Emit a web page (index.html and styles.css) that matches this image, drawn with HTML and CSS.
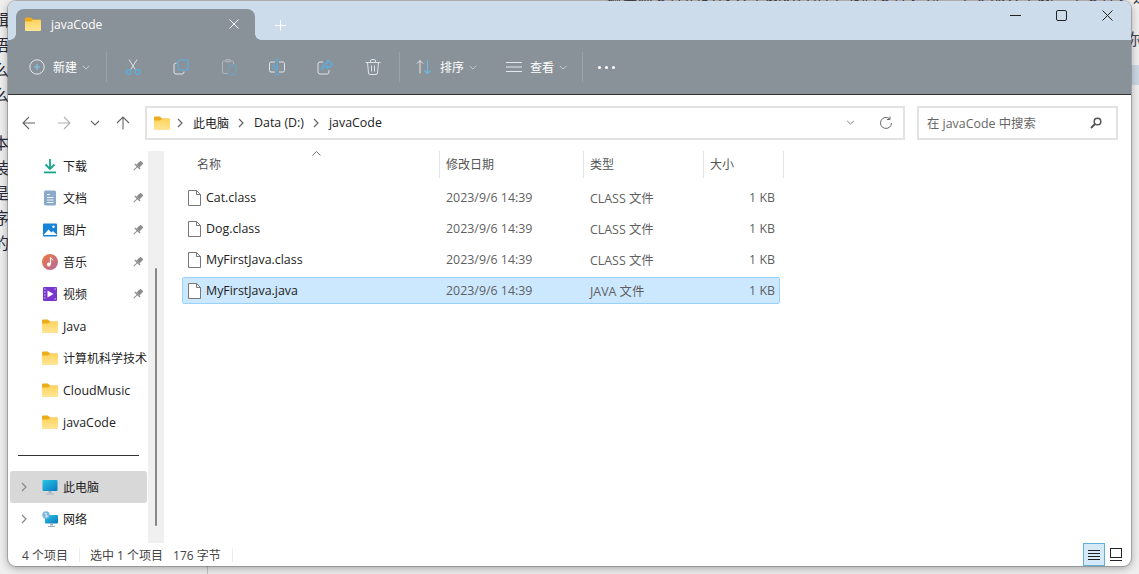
FILE: index.html
```html
<!DOCTYPE html>
<html>
<head lang="zh">
    <meta charset="UTF-8">
    <title>javaCode</title>
    <link rel="stylesheet" href="styles.css">
</head>
<body>

<svg class="icon-defs" xmlns="http://www.w3.org/2000/svg">
    <defs>
        <linearGradient id="folderFront" x1="0" y1="0" x2="0" y2="1">
            <stop offset="0" stop-color="#ffd45e"/>
            <stop offset="1" stop-color="#ffe596"/>
        </linearGradient>
        <linearGradient id="screenBlue" x1="0" y1="0" x2="1" y2="1">
            <stop offset="0" stop-color="#29c6e6"/>
            <stop offset="1" stop-color="#0a78bd"/>
        </linearGradient>
        <linearGradient id="musicBall" x1="0" y1="0" x2="1" y2="1">
            <stop offset="0" stop-color="#ee7a3c"/>
            <stop offset="1" stop-color="#b36aa0"/>
        </linearGradient>
        <symbol id="folder" viewBox="0 0 16 14">
            <path d="M0 1.5a1 1 0 0 1 1-1h5l2 2h7a1 1 0 0 1 1 1v9a1 1 0 0 1-1 1H1a1 1 0 0 1-1-1z" fill="#eeac1c"/>
            <path d="M0 4.5h6l2-1.5h7a1 1 0 0 1 1 1v9a1 1 0 0 1-1 1H1a1 1 0 0 1-1-1z" fill="url(#folderFront)"/>
        </symbol>
        <symbol id="file" viewBox="0 0 13 16">
            <path d="M.5.5h8l4 4v11H.5z" fill="#fff" stroke="#777"/>
            <path d="M8.5.5v4h4" fill="none" stroke="#777"/>
        </symbol>
        <symbol id="pin" viewBox="0 0 12 12">
            <g transform="rotate(45 6 6)" fill="#8b8b8b">
                <rect x="4" y="0.5" width="4" height="5.5"/>
                <rect x="2.4" y="6" width="7.2" height="1.4"/>
                <rect x="5.5" y="7" width="1" height="5"/>
            </g>
        </symbol>
        <symbol id="chev-down" viewBox="0 0 10 6">
            <path d="M1 1l4 4 4-4" fill="none" stroke="currentColor" stroke-width="1"/>
        </symbol>
        <symbol id="chev-right" viewBox="0 0 6 10">
            <path d="M1 1l4 4-4 4" fill="none" stroke="currentColor" stroke-width="1.2"/>
        </symbol>
    </defs>
</svg>

<!-- 窗口后面的文档，只露出边缘 -->
<div class="doc-left">
    <span>辑</span><span>语</span><span>么</span><span>么</span><span class="doc-gap">本</span><span>装</span><span>是</span><span>序</span><span>的</span>
</div>
<div class="doc-top">编译源文件的时候会生成对应的字节码文件，每一个类都会生成一个文件，运行的时候使用类名称</div>
<div class="doc-right">你</div>
<div class="doc-band"></div>
<div class="doc-line"></div>

<div class="window">

    <div class="titlebar">
        <div class="tab">
            <svg class="tab-folder"><use href="#folder"/></svg>
            <span class="tab-name">javaCode</span>
            <svg class="tab-close" viewBox="0 0 10 10"><path d="M.5.5l9 9M9.5.5l-9 9" stroke="#fff" stroke-width="1"/></svg>
        </div>
        <svg class="tab-add" viewBox="0 0 11 11"><path d="M5.5 0v11M0 5.5h11" stroke="#fff" stroke-width="1"/></svg>
        <div class="win-btns">
            <svg class="win-btn" viewBox="0 0 11 11"><path d="M0 5.5h11" stroke="#222" stroke-width="1"/></svg>
            <svg class="win-btn" viewBox="0 0 11 11"><rect x="0.5" y="0.5" width="10" height="10" rx="1.5" fill="none" stroke="#222"/></svg>
            <svg class="win-btn" viewBox="0 0 11 11"><path d="M.5.5l10 10M10.5.5l-10 10" stroke="#222" stroke-width="1"/></svg>
        </div>
    </div>

    <div class="toolbar">
        <div class="tool-new">
            <svg class="tool-svg" viewBox="0 0 16 16"><circle cx="8" cy="8" r="7.2" fill="none" stroke="#e4e8ec"/><path d="M8 5v6M5 8h6" stroke="#7cc4ec" stroke-width="1.2"/></svg>
            <span class="tool-text">新建</span>
            <svg class="tool-chev"><use href="#chev-down"/></svg>
        </div>
        <div class="tool-sep sep-first"></div>
        <div class="tool-btn">
            <svg class="tool-svg" viewBox="0 0 16 16"><path d="M4 .5l6.2 10M12 .5L5.8 10.5" stroke="#dfe3e6" fill="none"/><circle cx="3.5" cy="13" r="2.4" fill="none" stroke="#5aaee0" stroke-width="1.3"/><circle cx="12.5" cy="13" r="2.4" fill="none" stroke="#5aaee0" stroke-width="1.3"/></svg>
        </div>
        <div class="tool-btn">
            <svg class="tool-svg" viewBox="0 0 16 16"><rect x="5" y="1" width="10" height="10" rx="2" fill="none" stroke="#5aaee0" stroke-width="1.2"/><path d="M3.5 4H3a2 2 0 0 0-2 2v7a2 2 0 0 0 2 2h6a2 2 0 0 0 2-2v-.5" fill="none" stroke="#dfe3e6"/></svg>
        </div>
        <div class="tool-btn dim">
            <svg class="tool-svg" viewBox="0 0 16 16"><path d="M7 14.5H3A1.5 1.5 0 0 1 1.5 13V3.5A1.5 1.5 0 0 1 3 2h8a1.5 1.5 0 0 1 1.5 1.5V5" fill="none" stroke="#c4c9cd"/><rect x="4.5" y="0.5" width="5" height="2.5" rx="1" fill="none" stroke="#c4c9cd"/><rect x="8" y="6" width="7" height="9.5" rx="1" fill="none" stroke="#5aaee0"/></svg>
        </div>
        <div class="tool-btn">
            <svg class="tool-svg" viewBox="0 0 16 16"><path d="M6 3H2A1.5 1.5 0 0 0 .5 4.5v7A1.5 1.5 0 0 0 2 13h4M10 3h4a1.5 1.5 0 0 1 1.5 1.5v7A1.5 1.5 0 0 1 14 13h-4" fill="none" stroke="#dfe3e6"/><path d="M8 .5v15M6 .5h4M6 15.5h4" fill="none" stroke="#5aaee0" stroke-width="1.2"/><path d="M3 10.5l2-5 2 5" fill="none" stroke="#5aaee0"/></svg>
        </div>
        <div class="tool-btn">
            <svg class="tool-svg" viewBox="0 0 16 16"><path d="M6 3H3a2 2 0 0 0-2 2v8a2 2 0 0 0 2 2h7a2 2 0 0 0 2-2v-2" fill="none" stroke="#dfe3e6"/><path d="M10.5 1l5 4.3-5 4.2V7C7.5 7 6 8.500 5 11c0-4 2-6.500 5.500-6.800z" fill="none" stroke="#5aaee0" stroke-width="1.2"/></svg>
        </div>
        <div class="tool-btn">
            <svg class="tool-svg" viewBox="0 0 16 16"><path d="M.5 3.5h15M5.5 3.5V2A1.5 1.5 0 0 1 7 .5h2A1.5 1.5 0 0 1 10.5 2v1.5M2.500 3.5l1 10.500A1.5 1.5 0 0 0 5 15.500h6a1.5 1.5 0 0 0 1.500-1.500l1-10.500M6.500 6.500v6M9.500 6.500v6" fill="none" stroke="#dfe3e6"/></svg>
        </div>
        <div class="tool-sep sep-second"></div>
        <div class="tool-menu">
            <svg class="tool-svg" viewBox="0 0 16 16"><path d="M4 1.5v13M1 4.5l3-3 3 3" fill="none" stroke="#dfe3e6"/><path d="M11.5 1.5v13M8.5 11.5l3 3 3-3" fill="none" stroke="#6cb8e8" stroke-width="1.2"/></svg>
            <span class="tool-text">排序</span>
            <svg class="tool-chev"><use href="#chev-down"/></svg>
        </div>
        <div class="tool-menu view-menu">
            <svg class="tool-svg" viewBox="0 0 16 16"><path d="M0 3.5h16M0 8h16M0 12.5h16" stroke="#e4e8ec"/></svg>
            <span class="tool-text">查看</span>
            <svg class="tool-chev"><use href="#chev-down"/></svg>
        </div>
        <div class="tool-sep sep-third"></div>
        <div class="tool-dots"><i></i><i></i><i></i></div>
    </div>

    <div class="addressrow">
        <svg class="nav-btn nav-back" viewBox="0 0 34 14"><path d="M23 7H11M17 1l-6 6 6 6" fill="none" stroke="#666" stroke-width="1.1"/></svg>
        <svg class="nav-btn nav-fwd" viewBox="0 0 34 14"><path d="M11 7h12M17 1l6 6-6 6" fill="none" stroke="#b0b0b0" stroke-width="1.1"/></svg>
        <svg class="nav-btn nav-small" viewBox="0 0 28 14"><path d="M10 5l4 4 4-4" fill="none" stroke="#666" stroke-width="1.1"/></svg>
        <svg class="nav-btn nav-small" viewBox="0 0 28 14"><path d="M14 13.5V1M8 7l6-6 6 6" fill="none" stroke="#666" stroke-width="1.1"/></svg>

        <div class="address">
            <svg class="address-folder"><use href="#folder"/></svg>
            <svg class="crumb-chev"><use href="#chev-right"/></svg>
            <span class="crumb">此电脑</span>
            <svg class="crumb-chev"><use href="#chev-right"/></svg>
            <span class="crumb latin">Data (D:)</span>
            <svg class="crumb-chev"><use href="#chev-right"/></svg>
            <span class="crumb latin">javaCode</span>
            <svg class="address-down"><use href="#chev-down"/></svg>
            <svg class="address-refresh" viewBox="0 0 14 14"><path d="M12.5 7a5.500 5.500 0 1 1-2-4.300M11 .5v3H8" fill="none" stroke="#666" stroke-width="1"/></svg>
        </div>

        <div class="search">
            <span class="search-text latin">在 javaCode 中搜索</span>
            <svg class="search-icon" viewBox="0 0 12 12"><circle cx="7.5" cy="4.500" r="3.300" fill="none" stroke="#555" stroke-width="1.5"/><path d="M5 7l-4 4" stroke="#555" stroke-width="2"/></svg>
        </div>
    </div>

    <div class="content">
        <div class="sidebar">
            <div class="side-item">
                <i class="side-slot"></i>
                <svg class="side-icon" viewBox="0 0 16 16"><path d="M8 1v9.5M3.5 6.5L8 11l4.5-4.5" fill="none" stroke="#15a688" stroke-width="1.8"/><rect x="2" y="13.5" width="12" height="1.8" fill="#15a688"/></svg>
                <span>下载</span>
                <svg class="side-pin"><use href="#pin"/></svg>
            </div>
            <div class="side-item">
                <i class="side-slot"></i>
                <svg class="side-icon" viewBox="0 0 16 16"><rect x="2" y="0.5" width="12" height="15" rx="1.5" fill="#8ba9c9"/><path d="M5 4.5h3M5 7.5h6.500M5 10h6.500M5 12.500h6.500" stroke="#eef3f8"/></svg>
                <span>文档</span>
                <svg class="side-pin"><use href="#pin"/></svg>
            </div>
            <div class="side-item">
                <i class="side-slot"></i>
                <svg class="side-icon" viewBox="0 0 16 16"><rect x="1" y="1.5" width="14" height="13" rx="1" fill="#1583d8"/><path d="M1.5 13l5-5.500 3 3 1.500-1.500 4 4z" fill="#fff"/><circle cx="11.5" cy="4.800" r="1.200" fill="#fff"/></svg>
                <span>图片</span>
                <svg class="side-pin"><use href="#pin"/></svg>
            </div>
            <div class="side-item">
                <i class="side-slot"></i>
                <svg class="side-icon" viewBox="0 0 16 16"><circle cx="8" cy="8" r="8" fill="url(#musicBall)"/><path d="M8.5 3.5V10" stroke="#fff" stroke-width="1.2"/><path d="M8.5 3.5c.5 1.500 2.500 1.500 2.500 3" stroke="#fff" fill="none"/><circle cx="6.8" cy="10.500" r="1.900" fill="#fff"/></svg>
                <span>音乐</span>
                <svg class="side-pin"><use href="#pin"/></svg>
            </div>
            <div class="side-item">
                <i class="side-slot"></i>
                <svg class="side-icon" viewBox="0 0 16 16"><rect x="1" y="1" width="14" height="14" rx="1" fill="#7b35cf"/><path d="M5.5 4.500v7l6-3.500z" fill="#fff"/><path d="M2 3h1.500M2 6h1.500M2 9h1.500M2 12h1.500M12.500 3H14M12.500 13H14" stroke="#d9c3f3"/></svg>
                <span>视频</span>
                <svg class="side-pin"><use href="#pin"/></svg>
            </div>
            <div class="side-item">
                <i class="side-slot"></i>
                <svg class="side-icon"><use href="#folder"/></svg>
                <span class="latin">Java</span>
            </div>
            <div class="side-item">
                <i class="side-slot"></i>
                <svg class="side-icon"><use href="#folder"/></svg>
                <span>计算机科学技术</span>
            </div>
            <div class="side-item">
                <i class="side-slot"></i>
                <svg class="side-icon"><use href="#folder"/></svg>
                <span class="latin">CloudMusic</span>
            </div>
            <div class="side-item">
                <i class="side-slot"></i>
                <svg class="side-icon"><use href="#folder"/></svg>
                <span class="latin">javaCode</span>
            </div>

            <div class="side-sep"></div>

            <div class="side-item side-hover">
                <svg class="side-slot"><use href="#chev-right"/></svg>
                <svg class="side-icon" viewBox="0 0 16 16"><rect x="0.5" y="1" width="15" height="11" rx="1" fill="url(#screenBlue)"/><path d="M6.5 12h3v2h-3z" fill="#a8b6bf"/><path d="M4 15h8" stroke="#a8b6bf"/></svg>
                <span>此电脑</span>
            </div>
            <div class="side-item">
                <svg class="side-slot"><use href="#chev-right"/></svg>
                <svg class="side-icon" viewBox="0 0 16 16"><rect x="3" y="4" width="13" height="8.5" rx="1" fill="url(#screenBlue)"/><path d="M8 12.5h3v2H8z" fill="#9fb0ba"/><path d="M6 15.5h7" stroke="#9fb0ba"/><circle cx="4" cy="4" r="3.7" fill="#7fb6dc"/><path d="M2 2.5c2-1 3-.5 3 .5S3 4 3.5 5.5 5 6.5 6 5" fill="#dcecf7"/></svg>
                <span>网络</span>
            </div>
        </div>

        <div class="side-scroll"><div class="side-thumb"></div></div>

        <div class="files">
            <div class="file-head">
                <div class="head-cell head-name">名称
                    <svg class="sort-caret" viewBox="0 0 9 5"><path d="M.5 4.5l4-4 4 4" fill="none" stroke="#777"/></svg>
                </div>
                <div class="head-cell head-date">修改日期</div>
                <div class="head-cell head-type">类型</div>
                <div class="head-cell head-size">大小</div>
            </div>

            <div class="file-row">
                <div class="file-name"><svg class="file-icon"><use href="#file"/></svg>Cat.class</div>
                <div class="file-info">2023/9/6 14:39</div>
                <div class="file-info">CLASS 文件</div>
                <div class="file-info file-size">1 KB</div>
            </div>
            <div class="file-row">
                <div class="file-name"><svg class="file-icon"><use href="#file"/></svg>Dog.class</div>
                <div class="file-info">2023/9/6 14:39</div>
                <div class="file-info">CLASS 文件</div>
                <div class="file-info file-size">1 KB</div>
            </div>
            <div class="file-row">
                <div class="file-name"><svg class="file-icon"><use href="#file"/></svg>MyFirstJava.class</div>
                <div class="file-info">2023/9/6 14:39</div>
                <div class="file-info">CLASS 文件</div>
                <div class="file-info file-size">1 KB</div>
            </div>
            <div class="file-row file-selected">
                <div class="file-name"><svg class="file-icon"><use href="#file"/></svg>MyFirstJava.java</div>
                <div class="file-info">2023/9/6 14:39</div>
                <div class="file-info">JAVA 文件</div>
                <div class="file-info file-size">1 KB</div>
            </div>
        </div>
    </div>

    <div class="statusbar">
        <span class="status-count">4 个项目</span>
        <i class="status-sep"></i>
        <span class="status-chosen">选中 1 个项目</span>
        <span class="status-bytes">176 字节</span>
        <i class="status-sep status-sep-last"></i>
        <div class="view-list">
            <svg viewBox="0 0 12 12"><path d="M0 1.5h12M0 4.5h12M0 7.5h12M0 10.5h12" stroke="#222"/></svg>
        </div>
        <svg class="view-tile" viewBox="0 0 12 13"><rect x="0.5" y="0.5" width="11" height="9" fill="none" stroke="#222"/><path d="M0 12.5h12" stroke="#222"/></svg>
    </div>

</div>

</body>
</html>
```

FILE: styles.css
```css
html, body {
    margin: 0;
    padding: 0;
    width: 100%;
    height: 100%;
    overflow: hidden;
}

body {
    position: relative;
    background: #efefef;
    font-family: "Open Sans", "Noto Sans CJK SC", sans-serif;
    font-size: 12px;
    color: #222222;
}

svg {
    display: block;
    flex: none;
}

i {
    display: block;
    flex: none;
}

.latin {
    font-size: 12.4px;
}

.icon-defs {
    position: absolute;
    width: 0;
    height: 0;
}

/* 窗口后面的文档 */
.doc-left {
    position: absolute;
    left: -7px;
    top: 8px;
    display: flex;
    flex-direction: column;
    font-size: 16px;
    line-height: 25px;
    color: #2a2a3a;
}

.doc-gap {
    margin-top: 23px;
}

.doc-top {
    position: absolute;
    left: 605px;
    top: -14px;
    width: 534px;
    white-space: nowrap;
    overflow: hidden;
    font-size: 16px;
    line-height: 20px;
    color: #333344;
}

.doc-right {
    position: absolute;
    left: 1125px;
    top: 28px;
    font-size: 16px;
    line-height: 22px;
    color: #444455;
}

.doc-band {
    position: absolute;
    left: 1125px;
    top: 65px;
    width: 14px;
    height: 20px;
    background: #cbd8e4;
}

.doc-line {
    position: absolute;
    left: 207px;
    top: 560px;
    width: 1px;
    height: 14px;
    background: #c4c4c4;
}

/* 窗口 */
.window {
    position: absolute;
    left: 8px;
    top: 1px;
    width: 1123px;
    height: 565px;
    display: flex;
    flex-direction: column;
    background: #ffffff;
    border-radius: 8px;
    overflow: hidden;
    box-shadow: 0 0 0 1px rgba(90, 90, 90, 0.35), 0 2px 8px rgba(0, 0, 0, 0.35);
}

.titlebar {
    height: 39px;
    flex: none;
    display: flex;
    align-items: flex-end;
    background: #cddcea;
}

.tab {
    position: relative;
    width: 239px;
    height: 31px;
    margin-left: 8px;
    display: flex;
    align-items: center;
    background: #8a9299;
    border-radius: 8px 8px 0 0;
    color: #ffffff;
}

/* 标签页底部两边的小弧 */
.tab::before, .tab::after {
    content: "";
    position: absolute;
    bottom: 0;
    width: 6px;
    height: 6px;
}

.tab::before {
    left: -6px;
    background: radial-gradient(circle at 0 0, transparent 5.5px, #8a9299 6px);
}

.tab::after {
    right: -6px;
    background: radial-gradient(circle at 100% 0, transparent 5.5px, #8a9299 6px);
}

.tab-folder {
    width: 16px;
    height: 14px;
    margin: 0 0 1px 9px;
}

.tab-name {
    margin-left: 10px;
    font-size: 12px;
}

.tab-close {
    width: 10px;
    height: 10px;
    margin: -1px 16px 0 auto;
}

.tab-add {
    width: 11px;
    height: 11px;
    margin: 0 0 9px 20px;
}

.win-btns {
    margin-left: auto;
    align-self: stretch;
    display: flex;
    align-items: center;
    gap: 35px;
    padding: 0 18px 10px 0;
}

.win-btn {
    width: 11px;
    height: 11px;
}

.toolbar {
    height: 54px;
    flex: none;
    display: flex;
    align-items: center;
    background: #8a9299;
    border-bottom: 1px solid #333333;
    color: #ffffff;
}

.tool-new {
    display: flex;
    align-items: center;
    margin-left: 21px;
}

.tool-svg {
    width: 16px;
    height: 16px;
}

.tool-text {
    margin: 1px 0 0 8px;
    width: 24px;
    font-size: 12px;
    line-height: 16px;
}

.tool-chev {
    width: 8px;
    height: 5px;
    margin-left: 5px;
    color: #d5d9dc;
}

.tool-sep {
    width: 1px;
    height: 30px;
    background: #9aa1a7;
}

.sep-first {
    margin: 0 2px 0 16px;
}

.tool-btn {
    width: 48px;
    display: flex;
    justify-content: center;
}

.dim {
    opacity: 0.65;
}

.sep-second {
    margin: 0 16px 0 2px;
}

.tool-menu {
    display: flex;
    align-items: center;
}

.view-menu {
    margin-left: 29px;
}

.sep-third {
    margin: 0 15px 0 15px;
}

.tool-dots {
    display: flex;
    gap: 4px;
}

.tool-dots i {
    width: 3px;
    height: 3px;
    border-radius: 50%;
    background: #ffffff;
}

.addressrow {
    height: 55px;
    flex: none;
    display: flex;
    align-items: center;
    padding-left: 4px;
}

.nav-btn {
    height: 14px;
}

.nav-back, .nav-fwd {
    width: 34px;
}

.nav-fwd {
    margin-left: 1px;
}

.nav-small {
    width: 28px;
}

.address {
    width: 760px;
    height: 34px;
    box-sizing: border-box;
    margin-left: 8px;
    display: flex;
    align-items: center;
    padding-left: 7px;
    border: 2px solid #e2e2e2;
}

.address-folder {
    width: 16px;
    height: 14px;
}

.crumb-chev {
    width: 6px;
    height: 10px;
    margin: 0 10px 0 7px;
    color: #666666;
}

.crumb {
    color: #222222;
}

.crumb + .crumb-chev {
    margin-left: 9px;
}

.address-down {
    width: 9px;
    height: 5px;
    margin-left: auto;
    color: #666666;
}

.address-refresh {
    width: 14px;
    height: 14px;
    margin: 0 10px 0 24px;
}

.search {
    width: 201px;
    height: 34px;
    box-sizing: border-box;
    margin-left: 12px;
    display: flex;
    align-items: center;
    padding: 0 14px 0 8px;
    border: 2px solid #e2e2e2;
}

.search-text {
    color: #666666;
}

.search-icon {
    width: 12px;
    height: 12px;
    margin-left: auto;
}

.content {
    flex: 1;
    min-height: 0;
    display: flex;
}

.sidebar {
    width: 140px;
    flex: none;
}

.side-item {
    height: 32px;
    box-sizing: border-box;
    margin: 0 1px 0 2px;
    display: flex;
    align-items: center;
    padding: 0 3px 0 8px;
    white-space: nowrap;
    color: #222222;
}

.side-slot {
    width: 6px;
    height: 10px;
    margin-left: 3px;
    margin-right: 15px;
    color: #888888;
}

.side-icon {
    width: 16px;
    height: 16px;
    margin-right: 5px;
}

.side-pin {
    width: 12px;
    height: 12px;
    margin-left: auto;
}

.side-sep {
    height: 1px;
    margin: 17px 9px 15px 10px;
    background: #333333;
}

.side-hover {
    background: #d8d8d8;
    border-radius: 3px;
}

.side-scroll {
    width: 16px;
    flex: none;
    margin-top: 1px;
    background: #f0f0f0;
}

.side-thumb {
    width: 2px;
    height: 258px;
    margin: 117px 0 0 7px;
    background: #888888;
    border-radius: 1px;
}

.files {
    flex: 1;
    min-width: 0;
    padding: 1px 0 0 18px;
}

.file-head {
    height: 27px;
    display: flex;
    margin-bottom: 6px;
    color: #555555;
}

.head-cell {
    box-sizing: border-box;
    padding-left: 6px;
    line-height: 28px;
    border-right: 1px solid #e5e5e5;
}

.head-name {
    position: relative;
    width: 258px;
    padding-left: 15px;
}

.sort-caret {
    position: absolute;
    left: 130px;
    top: 0;
    width: 9px;
    height: 5px;
}

.head-date {
    width: 144px;
}

.head-type {
    width: 120px;
}

.head-size {
    width: 80px;
}

.file-row {
    width: 598px;
    height: 27px;
    box-sizing: border-box;
    display: grid;
    grid-template-columns: 258px 144px 100px 1fr;
    align-items: center;
    margin-bottom: 4px;
    padding: 0 4px 0 5px;
    border: 1px solid transparent;
    border-radius: 2px;
    font-size: 12.4px;
}

.file-selected {
    background: #cce8ff;
    border-color: #99d1ff;
}

.file-name {
    display: flex;
    align-items: center;
    color: #222222;
}

.file-icon {
    width: 13px;
    height: 16px;
    margin-right: 5px;
}

.file-info {
    color: #5f5f5f;
}

.file-size {
    text-align: right;
}

.statusbar {
    height: 23px;
    flex: none;
    display: flex;
    align-items: center;
    padding-left: 14px;
    color: #444444;
}

.status-sep {
    width: 1px;
    height: 14px;
    margin: 0 10px 0 11px;
    background: #ececec;
}

.status-bytes {
    margin-left: 10px;
}

.status-sep-last {
    margin-right: auto;
}

.view-list {
    width: 22px;
    height: 23px;
    box-sizing: border-box;
    display: flex;
    align-items: center;
    justify-content: center;
    background: #d5e9f7;
    border: 1px solid #5fb0d8;
}

.view-list svg {
    width: 12px;
    height: 12px;
}

.view-tile {
    width: 12px;
    height: 13px;
    margin: 0 9px 0 5px;
}
```
